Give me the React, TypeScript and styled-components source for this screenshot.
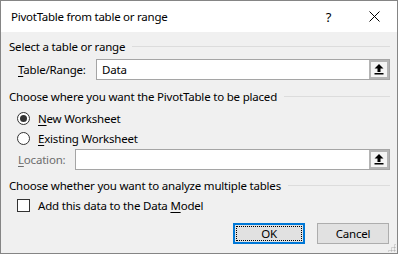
import styled, { createGlobalStyle } from 'styled-components'

const GlobalStyle = createGlobalStyle`
    html, body {
        margin: 0;
        padding: 0;
        background: #ffffff;
    }
    body {
        font-family: 'Noto Sans', 'Liberation Sans', sans-serif;
        font-size: 11.5px;
        letter-spacing: -0.2px;
        color: #000000;
    }
`

const Window = styled.div`
    width: 398px;
    height: 254px;
    box-sizing: border-box;
    border: 1px solid #858585;
    background: #f0f0f0;
    display: flex;
    flex-direction: column;
    position: relative;
`

const TitleBar = styled.div`
    height: 31px;
    background: #ffffff;
    display: flex;
    align-items: center;
    padding-left: 10px;
`

const Title = styled.div`
    flex: 1;
    font-size: 11.5px;
    letter-spacing: -0.25px;
`

const TitleButton = styled.div<{ $width: number }>`
    width: ${(p) => p.$width}px;
    height: 31px;
    display: flex;
    align-items: center;
    justify-content: center;
    font-size: 13px;
`

const Body = styled.div`
    flex: 1;
    display: flex;
    flex-direction: column;
    padding: 6px 7px 0 8px;
`

const GroupHeader = styled.div<{ $top: number }>`
    height: 16px;
    margin-top: ${(p) => p.$top}px;
    display: flex;
    align-items: center;
    gap: 7px;

    &::after {
        content: '';
        flex: 1;
        height: 1px;
        background: #dcdcdc;
    }
`

const FieldRow = styled.div<{ $top: number }>`
    height: 21px;
    margin-top: ${(p) => p.$top}px;
    display: flex;
    align-items: center;
    padding-left: 9px;
`

const FieldLabel = styled.div<{ $width: number; $disabled?: boolean }>`
    width: ${(p) => p.$width}px;
    color: ${(p) => (p.$disabled ? '#6d6d6d' : '#000000')};
`

const InputBox = styled.div`
    flex: 1;
    height: 21px;
    box-sizing: border-box;
    border: 1px solid #a5a5a5;
    background: #ffffff;
    display: flex;
    align-items: center;
    padding-left: 5px;
`

const InputText = styled.div`
    flex: 1;
`

const PickButton = styled.div`
    width: 20px;
    height: 19px;
    box-sizing: border-box;
    border: 2px solid #b4b4b4;
    background: #f4f4f4;
    display: flex;
    align-items: center;
    justify-content: center;
`

const OptionRow = styled.div<{ $top: number }>`
    height: 16px;
    margin-top: ${(p) => p.$top}px;
    display: flex;
    align-items: center;
    padding-left: 8px;
    gap: 8px;
`

const Radio = styled.div<{ $checked?: boolean }>`
    width: 13px;
    height: 13px;
    box-sizing: border-box;
    border: 1px solid #333333;
    border-radius: 50%;
    background: #ffffff;
    display: flex;
    align-items: center;
    justify-content: center;

    &::after {
        content: '';
        width: 7px;
        height: 7px;
        border-radius: 50%;
        background: ${(p) => (p.$checked ? '#333333' : 'transparent')};
    }
`

const CheckBox = styled.div`
    width: 13px;
    height: 13px;
    box-sizing: border-box;
    border: 1px solid #333333;
    background: #ffffff;
`

const Buttons = styled.div`
    margin-top: 10px;
    display: flex;
    justify-content: flex-end;
    gap: 12px;
    padding-right: 1px;
`

const Button = styled.div<{ $default?: boolean }>`
    width: 72px;
    height: 21px;
    box-sizing: border-box;
    border: ${(p) => (p.$default ? '2px solid #0078d7' : '1px solid #adadad')};
    background: #e1e1e1;
    display: flex;
    align-items: center;
    justify-content: center;
    position: relative;

    ${(p) =>
        p.$default &&
        `
        &::before {
            content: '';
            position: absolute;
            inset: 1px;
            border: 1px dotted #000000;
        }
    `}
`

const Grip = styled.div`
    position: absolute;
    right: 1px;
    bottom: 1px;
    width: 9px;
    height: 9px;
    background-image: radial-gradient(circle, #b8b8b8 45%, transparent 50%);
    background-size: 3px 3px;
    clip-path: polygon(100% 0, 100% 100%, 0 100%);
`

const U = styled.span`
    text-decoration: underline;
    text-underline-offset: 2px;
`

const UploadIcon = () => (
    <svg width="10" height="11" viewBox="0 0 10 11">
        <path d="M5 0 L9.5 4.5 L6.5 4.5 L6.5 8 L3.5 8 L3.5 4.5 L0.5 4.5 Z" fill="#000" />
        <rect x="0.5" y="9" width="9" height="1.5" fill="#000" />
    </svg>
)

const CloseIcon = () => (
    <svg width="11" height="11" viewBox="0 0 11 11">
        <path d="M0.5 0.5 L10.5 10.5 M10.5 0.5 L0.5 10.5" stroke="#000" strokeWidth="1" />
    </svg>
)

export default function App() {
    return (
        <>
            <GlobalStyle />
            <Window>
                <TitleBar>
                    <Title>PivotTable from table or range</Title>
                    <TitleButton $width={45}>?</TitleButton>
                    <TitleButton $width={46}>
                        <CloseIcon />
                    </TitleButton>
                </TitleBar>
                <Body>
                    <GroupHeader $top={0}>Select a table or range</GroupHeader>
                    <FieldRow $top={5}>
                        <FieldLabel $width={78}>
                            <U>T</U>able/Range:
                        </FieldLabel>
                        <InputBox>
                            <InputText>Data</InputText>
                            <PickButton>
                                <UploadIcon />
                            </PickButton>
                        </InputBox>
                    </FieldRow>
                    <GroupHeader $top={8}>Choose where you want the PivotTable to be placed</GroupHeader>
                    <OptionRow $top={6}>
                        <Radio $checked />
                        <span>
                            <U>N</U>ew Worksheet
                        </span>
                    </OptionRow>
                    <OptionRow $top={4}>
                        <Radio />
                        <span>
                            <U>E</U>xisting Worksheet
                        </span>
                    </OptionRow>
                    <FieldRow $top={3}>
                        <FieldLabel $width={57} $disabled>
                            <U>L</U>ocation:
                        </FieldLabel>
                        <InputBox>
                            <InputText />
                            <PickButton>
                                <UploadIcon />
                            </PickButton>
                        </InputBox>
                    </FieldRow>
                    <GroupHeader $top={7}>Choose whether you want to analyze multiple tables</GroupHeader>
                    <OptionRow $top={4}>
                        <CheckBox />
                        <span>
                            Add this data to the Data <U>M</U>odel
                        </span>
                    </OptionRow>
                    <Buttons>
                        <Button $default>OK</Button>
                        <Button>Cancel</Button>
                    </Buttons>
                </Body>
                <Grip />
            </Window>
        </>
    )
}
